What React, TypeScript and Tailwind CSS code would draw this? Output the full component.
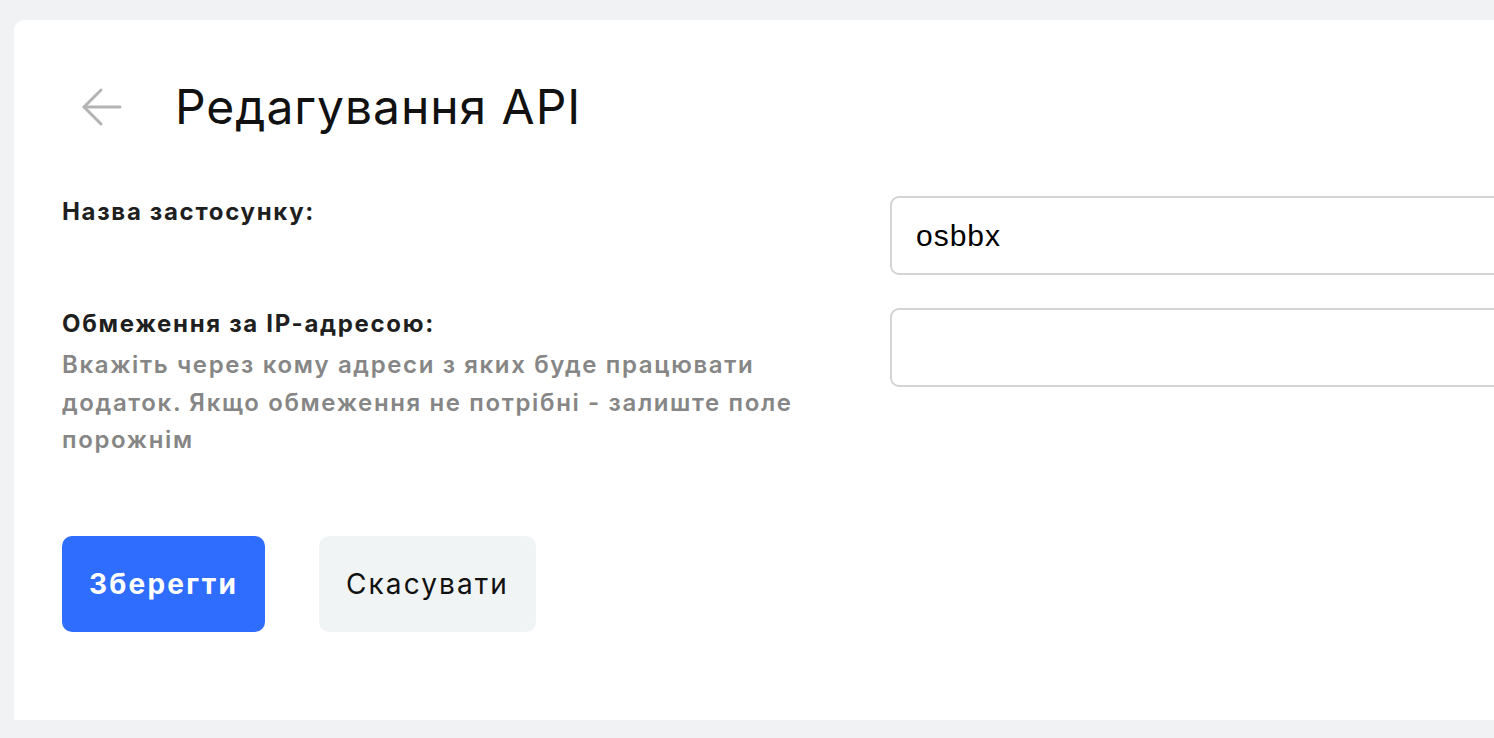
import React, { useState } from 'react';

const BackArrow: React.FC = () => (
  <svg width="42" height="40" viewBox="0 0 42 40" fill="none" stroke="#b3b3b3" strokeWidth="3" strokeLinecap="round" strokeLinejoin="round">
    <path d="M39 20H3" />
    <path d="M20 3 3 20l17 17" />
  </svg>
);

const App: React.FC = () => {
  const [appName, setAppName] = useState('osbbx');
  const [ipList, setIpList] = useState('');

  return (
    <div className="h-screen overflow-hidden bg-[#f1f2f4] pt-5 pl-[14px] font-['Inter',sans-serif]">
      <div className="h-[700px] bg-white rounded-tl-[10px] pl-12 pt-[57px]">
        {/* header */}
        <div className="flex items-center h-[60px]">
          <button className="w-[80px] h-[60px] flex items-center justify-center">
            <BackArrow />
          </button>
          <h1 className="ml-[33px] text-[48px] tracking-[0.02em] text-[#111] font-normal leading-none">Редагування API</h1>
        </div>

        {/* form */}
        <div className="mt-[59px]">
          <div className="flex">
            <div className="w-[828px] shrink-0">
              <label className="block text-[24px] leading-[32px] font-bold text-[#1f1f1f] tracking-[0.07em]">Назва застосунку:</label>
            </div>
            <input
              value={appName}
              onChange={(e) => setAppName(e.target.value)}
              className="w-[700px] shrink-0 h-[79px] rounded-[9px] border-2 border-[#d4d4d4] px-6 text-[30px] tracking-[1px] text-black font-['Liberation_Sans',sans-serif] outline-none"
            />
          </div>

          <div className="flex mt-[33px]">
            <div className="w-[828px] shrink-0">
              <label className="block text-[24px] leading-[32px] font-bold text-[#1f1f1f] tracking-[0.07em]">Обмеження за IP-адресою:</label>
              <p className="mt-[6px] max-w-[770px] text-[24px] leading-[37.5px] font-semibold text-[#868686] tracking-[0.068em]">
                Вкажіть через кому адреси з яких буде працювати додаток. Якщо обмеження не потрібні - залиште поле порожнім
              </p>
            </div>
            <input
              value={ipList}
              onChange={(e) => setIpList(e.target.value)}
              className="w-[700px] shrink-0 h-[79px] rounded-[9px] border-2 border-[#d4d4d4] px-6 text-[30px] text-black font-['Liberation_Sans',sans-serif] outline-none"
            />
          </div>

          {/* actions */}
          <div className="flex gap-[54px] mt-[77px]">
            <button className="w-[203px] h-[96px] rounded-[10px] bg-[#2f6dff] text-white text-[28px] font-bold tracking-[0.08em]">Зберегти</button>
            <button className="w-[217px] h-[96px] rounded-[10px] bg-[#f1f4f5] text-[#111] text-[28px] font-normal tracking-[0.075em]">Скасувати</button>
          </div>
        </div>
      </div>
    </div>
  );
};

export default App;
